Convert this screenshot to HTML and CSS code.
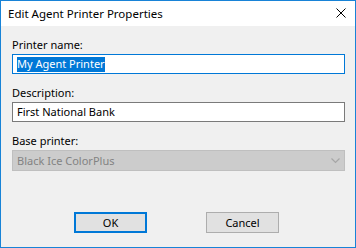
FILE: index.html
```html
<!DOCTYPE html>
<html lang="en">

<head>
  <meta charset="UTF-8">
  <title>Edit Agent Printer Properties</title>
  <link rel="stylesheet" href="styles.css">
</head>

<body>
  <div class="window">
    <div class="titlebar">
      <span class="title">Edit Agent Printer Properties</span>
      <span class="close">
        <svg width="10" height="10" viewBox="0 0 10 10">
          <path d="M0.5 0.5 L9.5 9.5 M9.5 0.5 L0.5 9.5" stroke="#000" stroke-width="1" fill="none" />
        </svg>
      </span>
    </div>

    <div class="content">
      <div class="form-group">
        <label>Printer name:</label>
        <div class="field focused"><span class="selected">My Agent Printer</span></div>
      </div>

      <div class="form-group">
        <label>Description:</label>
        <div class="field">First National Bank</div>
      </div>

      <div class="form-group last">
        <label>Base printer:</label>
        <div class="field combo">
          <span>Black Ice ColorPlus</span>
          <svg width="9" height="6" viewBox="0 0 9 6">
            <path d="M0.5 0.5 L4.5 4.5 L8.5 0.5" stroke="#a6a6a6" stroke-width="1.2" fill="none" />
          </svg>
        </div>
      </div>

      <div class="buttons">
        <div class="button default">OK</div>
        <div class="button">Cancel</div>
      </div>
    </div>
  </div>
</body>

</html>
```

FILE: styles.css
```css
body {
  margin: 0;
  font-family: "Noto Sans", Arial, sans-serif;
  font-size: 11px;
  color: #000000;
}

.window {
  width: 356px;
  height: 248px;
  box-sizing: border-box;
  border: 1px solid #1883d7;
  background-color: #f0f0f0;
  display: flex;
  flex-direction: column;
}

.titlebar {
  height: 25px;
  background-color: #ffffff;
  display: flex;
  align-items: center;
  justify-content: space-between;
  padding: 0 9px 0 7px;
}

.title {
  line-height: 16px;
  font-size: 11.5px;
}

.close {
  display: flex;
  margin-top: -1px;
}

.content {
  flex: 1;
  padding: 12px 10px 0 11px;
}

.form-group {
  margin-bottom: 12px;
}

.form-group.last {
  margin-bottom: 0;
}

.form-group label {
  display: block;
  line-height: 14px;
  margin-bottom: 2px;
}

.field {
  height: 20px;
  box-sizing: border-box;
  border: 1px solid #7a7a7a;
  background-color: #ffffff;
  padding: 0 4px;
  display: flex;
  align-items: center;
  line-height: 14px;
}

.field.focused {
  border-color: #0078d7;
}

.selected {
  background-color: #0078d7;
  color: #ffffff;
  padding-bottom: 1px;
}

.field.combo {
  height: 21px;
  background-color: #cccccc;
  border-color: #bfbfbf;
  color: #838383;
  justify-content: space-between;
  padding-right: 4px;
}

.buttons {
  display: flex;
  gap: 59px;
  padding-left: 62px;
  margin-top: 41px;
}

.button {
  width: 73px;
  height: 21px;
  box-sizing: border-box;
  border: 1px solid #adadad;
  background-color: #e1e1e1;
  display: flex;
  align-items: center;
  justify-content: center;
}

.button.default {
  border: 2px solid #0078d7;
}
```
